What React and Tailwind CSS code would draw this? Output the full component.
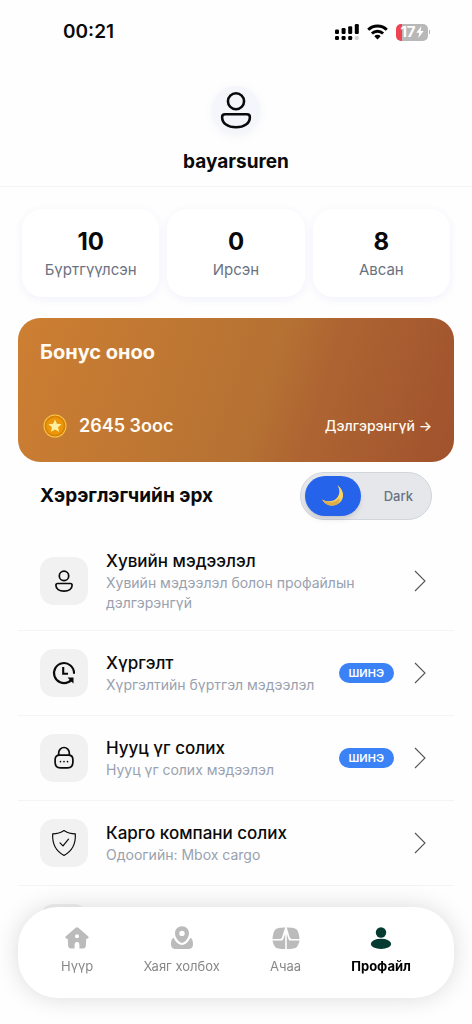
import React, { useState } from "react";

const stats = [
  { value: 10, label: "Бүртгүүлсэн" },
  { value: 0, label: "Ирсэн" },
  { value: 8, label: "Авсан" },
];

const menu = [
  { title: "Хувийн мэдээлэл", text: "Хувийн мэдээлэл болон профайлын дэлгэрэнгүй", icon: UserIcon },
  { title: "Хүргэлт", text: "Хүргэлтийн бүртгэл мэдээлэл", icon: ClockIcon, isNew: true },
  { title: "Нууц үг солих", text: "Нууц үг солих мэдээлэл", icon: LockIcon, isNew: true },
  { title: "Карго компани солих", text: "Одоогийн: Mbox cargo", icon: ShieldIcon },
];

const tabs = [
  { label: "Нүүр", icon: HomeIcon },
  { label: "Хаяг холбох", icon: PinIcon },
  { label: "Ачаа", icon: CargoIcon },
  { label: "Профайл", icon: ProfileIcon, active: true },
];

function UserIcon({ className = "w-7 h-7", stroke = 1.7 }) {
  return (
    <svg className={className} viewBox="0 0 28 28" fill="none" stroke="currentColor" strokeWidth={stroke} aria-hidden="true">
      <circle cx="14" cy="8.9" r="4.7" />
      <path strokeLinejoin="round" d="M7.6 16.500h12.800c1 0 1.700.7 1.700 1.700 0 3.600-3.300 5.900-8.100 5.900s-8.100-2.300-8.100-5.900c0-1 .7-1.700 1.700-1.700Z" />
    </svg>
  );
}

function ClockIcon() {
  return (
    <svg className="w-7 h-7" viewBox="0 0 28 28" fill="none" stroke="currentColor" strokeWidth="2.100" aria-hidden="true">
      <path strokeLinecap="round" d="M24 14A10 10 0 1 0 18.500 23" />
      <path d="M13.200 8v6.800H18" />
      <path fill="currentColor" stroke="none" d="M17.600 18.600h5.900v5.900l-2-1.700-2.500 1.200-1-1.800 1.500-1.500Z" />
    </svg>
  );
}

function LockIcon() {
  return (
    <svg className="w-7 h-7" viewBox="0 0 28 28" fill="none" stroke="currentColor" strokeWidth="1.700" aria-hidden="true">
      <path d="M8.700 11.500V8.800a5.300 5.300 0 0 1 10.600 0v2.700" />
      <path d="M9.500 11.200h9c3 0 4.400 1.400 4.400 4.500v2.200c0 4-1.600 6-5.200 6h-7.400c-3.600 0-5.200-2-5.200-6v-2.200c0-3.100 1.400-4.500 4.400-4.500Z" />
      <path strokeLinecap="round" d="M10.500 17.600h.01M14 17.600h.01M17.500 17.600h.01" />
    </svg>
  );
}

function ShieldIcon() {
  return (
    <svg className="w-7 h-7" viewBox="0 0 28 28" fill="none" stroke="currentColor" strokeWidth="1.200" strokeLinejoin="round" strokeLinecap="round" aria-hidden="true">
      <path d="M14 1.500c3.200 2.200 7.200 3.300 11.300 3.400.6 9.800-3 17.100-11.300 21.600C5.700 22 2.100 14.700 2.700 4.900 6.800 4.800 10.800 3.700 14 1.500Z" />
      <path d="m10 13.800 3 3 5.500-6.600" />
    </svg>
  );
}

function HomeIcon() {
  return (
    <svg className="w-6 h-6" viewBox="0 0 24 24" fill="currentColor" aria-hidden="true">
      <path fillRule="evenodd" d="M10.700 1.700a2 2 0 0 1 2.600 0l9.800 8.500c1 .9.500 2.500-.9 2.600h-1l-.3 6.700c-.1 2-1.100 3-3 3h-3.500v-4a2.400 2.400 0 0 0-4.800 0v4H6.100c-1.900 0-2.900-1-3-3l-.3-6.700h-1c-1.400-.1-1.900-1.700-.9-2.600ZM12 8.200a2 2 0 1 0 0 4 2 2 0 0 0 0-4Z" />
    </svg>
  );
}

function PinIcon() {
  return (
    <svg className="w-6 h-6" viewBox="0 0 24 24" fill="currentColor" aria-hidden="true">
      <path fillRule="evenodd" d="M12 .3c4 0 7 3 7 6.900 0 4.100-3.500 8.900-7 9.800-3.500-.9-7-5.700-7-9.800 0-3.900 3-6.900 7-6.900Zm0 4.400a2.700 2.700 0 1 0 0 5.400 2.700 2.700 0 0 0 0-5.400Z" />
      <path d="M3.600 11.700c1.700 4 4.900 7 8.400 7.300 3.500-.3 6.700-3.300 8.400-7.300 1.500.7 2.600 3 2.600 5.800 0 4.200-1.600 5.500-5 5.500H6c-3.400 0-5-1.300-5-5.500 0-2.800 1.100-5.100 2.600-5.800Z" />
    </svg>
  );
}

function CargoIcon() {
  return (
    <svg className="w-7 h-6" viewBox="0 0 28 24" fill="currentColor" aria-hidden="true">
      <path d="M13.200 1.500 10 11.200 8.600 13H.5C.7 9 1.500 6 3.100 3.700 4.100 2.300 8 1.500 13.200 1.500Z" />
      <path d="M14.800 1.500 17.700 11.200 19.100 13h8.400c-.2-4-1-7-2.600-9.300-1-1.400-4.900-2.200-10.100-2.200Z" />
      <path d="M.6 14.600h8.700c.9 0 1.500-.4 1.900-1.400l2-5.200v15c-5.200 0-8.900-.7-10-2.100-1.400-1.700-2.300-3.600-2.600-6.300Z" />
      <path d="M27.400 14.600h-9.100c-.9 0-1.500-.6-1.800-1.600L14.800 8v15c5.200 0 8.900-.7 10-2.100 1.400-1.700 2.300-3.600 2.600-6.300Z" />
    </svg>
  );
}

function ProfileIcon() {
  return (
    <svg className="w-6 h-6" viewBox="0 0 24 24" fill="#063b32" aria-hidden="true">
      <circle cx="12" cy="6.500" r="5.200" />
      <ellipse cx="12" cy="17.900" rx="10.200" ry="5.100" />
    </svg>
  );
}

function CoinIcon() {
  return (
    <svg className="w-6 h-6" viewBox="0 0 24 24" aria-hidden="true">
      <circle cx="12" cy="12" r="11.500" fill="#f9c74a" />
      <circle cx="12" cy="12" r="10.500" fill="#d98206" />
      <circle cx="12" cy="12" r="8.700" fill="#ec960c" />
      <path fill="#fff0a0" d="m12 5.500 1.900 4.200 4.600.5-3.400 3.100.9 4.500-4-2.300-4 2.300.9-4.500-3.400-3.100 4.600-.5Z" />
    </svg>
  );
}

function StatusBar() {
  return (
    <div className="flex items-center justify-between h-16 pl-[63px] pr-[42px]">
      <span className="text-[19px] leading-6 font-semibold">00:21</span>
      <div className="flex items-center gap-2">
        <svg className="w-6 h-4" viewBox="0 0 24 16" aria-hidden="true">
          <rect x="0" y="5.500" width="4" height="4.500" rx="1.200" />
          <rect x="6.600" y="4" width="4" height="6" rx="1.200" />
          <rect x="13.200" y="2.200" width="4" height="7.800" rx="1.200" />
          <rect x="19.800" y="0" width="4" height="10" rx="1.200" />
          <rect x="0" y="12" width="4" height="4" rx="1.200" />
          <rect x="6.600" y="12" width="4" height="4" rx="1.200" />
          <rect x="13.200" y="12" width="4" height="4" rx="1.200" />
          <rect x="19.800" y="12" width="4" height="4" rx="1.200" fill="#d4d4d4" />
        </svg>
        <svg className="w-[21px] h-4" viewBox="0 0 21 16" fill="none" stroke="#000" strokeWidth="2.900" aria-hidden="true">
          <path d="M1.200 5.700a13.400 13.400 0 0 1 18.600 0" />
          <path d="M4.900 9.500a8 8 0 0 1 11.200 0" />
          <path fill="#000" stroke="none" d="M10.500 15.500 7.300 12.200a4.500 4.500 0 0 1 6.400 0Z" />
        </svg>
        <div className="flex items-center gap-px">
          <div className="flex items-center justify-center w-8 h-[17px] rounded-[5px] bg-[linear-gradient(90deg,#ee4452_19%,#b8b8b8_19%)] text-white">
            <span className="text-[15px] leading-4 font-bold">17</span>
            <svg className="w-2 h-3" viewBox="0 0 8 12" fill="currentColor" aria-hidden="true">
              <path d="M5.500 0 .3 6.800h3L2.300 12l5.400-6.900H4.600Z" />
            </svg>
          </div>
          <span className="w-px h-1 bg-[#b8b8b8]"></span>
        </div>
      </div>
    </div>
  );
}

export default function App() {
  const [isLight, setIsLight] = useState(false);

  return (
    <div className="min-h-screen bg-[#fefefe] text-[#0a0a0a] font-['Inter','Noto_Sans',sans-serif]">
      <StatusBar />

      <header className="flex flex-col items-center pt-[22px] pb-3 border-b border-gray-100">
        <div className="flex items-center justify-center w-12 h-12 rounded-full bg-[#f4f6fc] shadow-[0_2px_10px_rgba(90,100,180,0.08)]">
          <UserIcon className="w-12 h-12" stroke={1.5} />
        </div>
        <h1 className="mt-4 text-[19px] leading-6 font-bold">bayarsuren</h1>
      </header>

      <main>
        <section className="grid grid-cols-3 gap-2 px-[22px] pt-[22px]">
          {stats.map((s) => (
            <div key={s.label} className="flex flex-col items-center pt-[19px] pb-[17px] rounded-[20px] bg-white shadow-[0_2px_8px_rgba(80,90,230,0.08)]">
              <span className="text-[24px] leading-7 font-bold">{s.value}</span>
              <span className="mt-1 text-[15px] leading-5 text-gray-500">{s.label}</span>
            </div>
          ))}
        </section>

        <section className="flex flex-col justify-between min-h-36 mx-[18px] mt-[21px] px-[22px] pt-[22px] pb-6 rounded-[22px] text-[#fffaf2] bg-[linear-gradient(108deg,#cd7f32_0%,#b57133_56%,#ae6432_68%,#a0522d_100%)]">
          <h2 className="text-[20px] leading-6 font-bold">Бонус оноо</h2>
          <div className="flex items-center justify-between">
            <div className="flex items-center gap-3 pl-[3px]">
              <CoinIcon />
              <span className="text-[18px] leading-6 font-semibold">2645 Зоос</span>
            </div>
            <a href="#bonus" className="text-[14px] leading-6 font-medium">
              Дэлгэрэнгүй →
            </a>
          </div>
        </section>

        <section className="flex items-center justify-between px-10 pt-[10px]">
          <h2 className="text-[19px] leading-6 font-bold">Хэрэглэгчийн эрх</h2>
          {/* theme switch, knob sits left while light mode is off */}
          <label className={`flex items-center justify-between w-33 h-12 p-1 rounded-full border border-gray-300 bg-gray-200 cursor-pointer ${isLight ? "flex-row-reverse" : ""}`}>
            <input type="checkbox" className="sr-only" checked={isLight} onChange={() => setIsLight(!isLight)} />
            <span className="flex items-center justify-center w-14 h-10 rounded-full bg-[#2563eb] shadow-md">
              <svg className="w-6 h-6" viewBox="0 0 24 24" aria-hidden="true">
                <path fill="#fbd562" d="M16.500 1.200c6.500 4.400 7.400 12.600 2.300 17.400-5.300 5-14.200 3.300-17.600-3.200 6 3.500 12.600 2 15.500-2.400 2.400-3.700 2.200-7.900-.2-11.800Z" />
                <path fill="#e0aa45" d="M1.200 15.400c6 4.600 13.600 3.300 17.200-1.300.9 2-.1 4-1.600 5.600-5.200 3.700-12.600 1.700-15.600-4.300Z" />
              </svg>
            </span>
            <span className="px-[14px] text-[13px] leading-5 font-medium text-gray-500">Dark</span>
          </label>
        </section>

        <ul className="mx-[18px] mt-3">
          {menu.map((item) => (
            <li key={item.title} className="border-b border-gray-100">
              <a href="#menu" className="flex items-center min-h-[84px] pl-[22px] pr-7 py-[17px]">
                <span className="flex items-center justify-center shrink-0 w-12 h-12 rounded-[14px] bg-[#f1f1f1]">
                  <item.icon />
                </span>
                <span className="flex flex-col flex-1 ml-[18px]">
                  <span className="text-[17px] leading-6 font-medium">{item.title}</span>
                  <span className="text-[14px] leading-5 text-gray-400">{item.text}</span>
                </span>
                {item.isNew && (
                  <span className="shrink-0 px-[10px] rounded-full bg-[#3b82f6] text-white text-[11px] leading-5 font-semibold">ШИНЭ</span>
                )}
                <svg className="shrink-0 w-3 h-6 ml-5" viewBox="0 0 12 24" fill="none" stroke="#555" strokeWidth="1.100" aria-hidden="true">
                  <path d="m1 2 10 10L1 22" />
                </svg>
              </a>
            </li>
          ))}
          <li className="flex items-center h-[84px] px-[22px]" aria-hidden="true">
            <span className="w-12 h-12 rounded-[14px] bg-[#f1f1f1]"></span>
          </li>
        </ul>
      </main>

      <nav className="fixed bottom-[26px] inset-x-[18px] flex items-start justify-between h-[91px] pt-[19px] px-[43px] rounded-[40px] bg-white shadow-[0_0_24px_rgba(0,0,0,0.14)]">
        {tabs.map((tab) => (
          <a
            key={tab.label}
            href="#tab"
            className={`flex flex-col items-center gap-[6px] text-[13px] leading-5 ${tab.active ? "font-bold text-black" : "text-[#888]"}`}
          >
            <span className={tab.active ? "" : "text-[#bbb]"}>
              <tab.icon />
            </span>
            {tab.label}
          </a>
        ))}
      </nav>
    </div>
  );
}
